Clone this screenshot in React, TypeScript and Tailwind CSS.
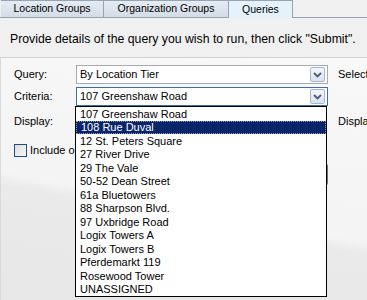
const tabs = [
  { name: "Location Groups", width: "w-[103px]", active: false },
  { name: "Organization Groups", width: "w-[125px]", active: false },
  { name: "Queries", width: "w-[64px]", active: true },
];

const locations = [
  "107 Greenshaw Road",
  "108 Rue Duval",
  "12 St. Peters Square",
  "27 River Drive",
  "29 The Vale",
  "50-52 Dean Street",
  "61a Bluetowers",
  "88 Sharpson Blvd.",
  "97 Uxbridge Road",
  "Logix Towers A",
  "Logix Towers B",
  "Pferdemarkt 119",
  "Rosewood Tower",
  "UNASSIGNED",
];

function ComboButton() {
  return (
    <div className="mr-[2px] flex h-[15px] w-[15px] items-center justify-center rounded-[2px] border border-[#a9b6c6] bg-[linear-gradient(#f3f7fc,#d9e3ef)]">
      <svg width="9" height="6" viewBox="0 0 9 6">
        <path d="M1 1 L4.5 4.5 L8 1" fill="none" stroke="#4a5d80" strokeWidth="1.8" />
      </svg>
    </div>
  );
}

function Combo({ value, focused }: { value: string; focused?: boolean }) {
  return (
    <div
      className={`flex h-[19px] w-[252px] items-center justify-between border bg-white pl-[3px] ${
        focused ? "border-[#3b6fa8]" : "border-[#a7abb0]"
      }`}
    >
      <span className="text-[11px]">{value}</span>
      <ComboButton />
    </div>
  );
}

export default function App() {
  const selected = 1;

  return (
    <div className="relative h-[300px] w-[367px] overflow-hidden bg-[#f0f0f0] font-['Liberation_Sans',Arial,sans-serif] text-[11px] text-black">
      <div className="flex h-[18px]">
        <div className="w-[1px] border-b border-[#98a3b1]" />
        {tabs.map((tab) => (
          <div
            key={tab.name}
            className={`flex shrink-0 items-center justify-center border-r border-t border-[#98a3b1] first:border-l text-[10.5px] ${tab.width} ${
              tab.active ? "border-b-0 bg-[#e4f2fc]" : "border-b bg-[linear-gradient(#e6ecf3,#d3dce7)]"
            }`}
          >
            {tab.name}
          </div>
        ))}
        <div className="flex-1 border-b border-[#98a3b1]" />
      </div>

      <div className="flex h-[40px] items-center border-b border-[#d3d3d3] pl-[10px] pt-[3px] text-[12.25px] whitespace-nowrap">
        Provide details of the query you wish to run, then click "Submit".
      </div>

      <div className="h-[242px] w-[500px] border-l border-[#dadada] bg-[linear-gradient(191deg,#f9f9f9_0%,#f4f4f4_62%,#eaeaea_66%,#e7e7e7_100%)] pt-[7px]">
        <div className="flex items-center">
          <div className="w-[75px] pl-[13px]">Query:</div>
          <Combo value="By Location Tier" />
          <div className="ml-[10px]">Select</div>
        </div>
        <div className="mt-[3px] flex items-center">
          <div className="w-[75px] pl-[13px]">Criteria:</div>
          <Combo value="107 Greenshaw Road" focused />
        </div>
        <div className="mt-[8px] flex h-[14px] items-center">
          <div className="w-[337px] pl-[13px]">Display:</div>
          <div>Displa</div>
        </div>
        <div className="mt-[14px] flex items-center pl-[13px]">
          <div className="h-[13px] w-[13px] border border-[#1f4f7e] bg-[linear-gradient(135deg,#dcdcdc,#f8f8f8)]" />
          <span className="ml-[3px] whitespace-nowrap">Include obsolete locations</span>
        </div>
        <div className="ml-[246px] mt-[4px] h-[23px] w-[81px] rounded-[3px] border border-[#707070] bg-[#e5e5e5]" />
      </div>

      <div className="absolute left-[75px] top-[106px] h-[191px] w-[252px] border border-black bg-white">
        {locations.map((loc, i) => (
          <div
            key={loc}
            className={`flex h-[13.5px] items-center pl-[4px] text-[11px] ${
              i === selected ? "border border-dotted border-[#8a9ac0] bg-[#0a246a] pl-[3px] text-white" : ""
            }`}
          >
            {loc}
          </div>
        ))}
      </div>
    </div>
  );
}
